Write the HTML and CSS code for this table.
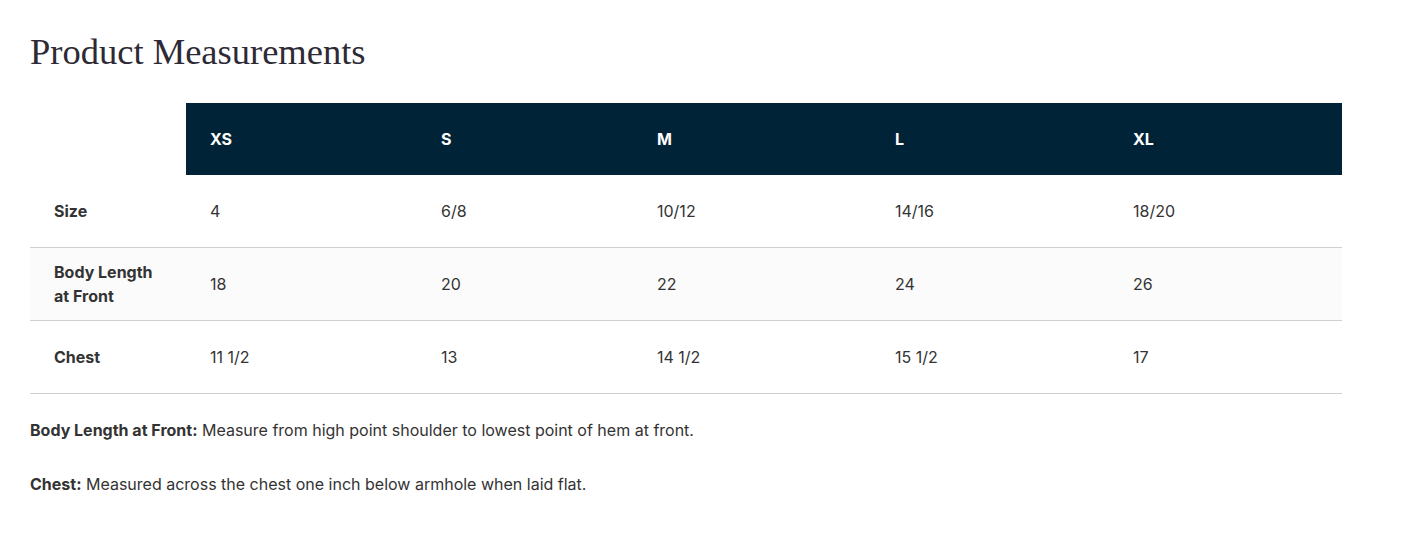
FILE: index.html
```html
<!DOCTYPE html>
<html>
<head>
<meta charset="utf-8">
<link rel="stylesheet" href="styles.css">
</head>
<body>
<section class="measure">
  <h2 class="title">Product Measurements</h2>
  <table class="chart">
    <thead>
      <tr>
        <th class="c0 blank"></th>
        <th class="c1">XS</th>
        <th class="c2">S</th>
        <th class="c3">M</th>
        <th class="c4">L</th>
        <th class="c5">XL</th>
      </tr>
    </thead>
    <tbody>
      <tr>
        <th class="rowhead">Size</th>
        <td>4</td><td>6/8</td><td>10/12</td><td>14/16</td><td>18/20</td>
      </tr>
      <tr class="alt">
        <th class="rowhead">Body Length at Front</th>
        <td>18</td><td>20</td><td>22</td><td>24</td><td>26</td>
      </tr>
      <tr>
        <th class="rowhead">Chest</th>
        <td>11 1/2</td><td>13</td><td>14 1/2</td><td>15 1/2</td><td>17</td>
      </tr>
    </tbody>
  </table>
  <p class="note"><strong>Body Length at Front:</strong> Measure from high point shoulder to lowest point of hem at front.</p>
  <p class="note"><strong>Chest:</strong> Measured across the chest one inch below armhole when laid flat.</p>
</section>
</body>
</html>
```
FILE: styles.css
```css
html, body {
  margin: 0;
  padding: 0;
  background: #ffffff;
}
body {
  font-family: Inter, "Noto Sans", sans-serif;
  color: #333333;
  font-size: 16px;
}
.measure {
  padding: 30px 84px 0 30px;
}
.title {
  font-family: "Liberation Serif", "DejaVu Serif", serif;
  font-weight: 400;
  font-size: 36.5px;
  line-height: 44px;
  color: #2d2a35;
  margin: 0 0 29px 0;
}
.chart {
  width: 1312px;
  border-collapse: separate;
  border-spacing: 0;
  table-layout: fixed;
}
.chart th, .chart td {
  text-align: left;
  padding: 0 24px;
  height: 72px;
  vertical-align: middle;
  line-height: 24px;
}
.chart thead th {
  background: #012338;
  color: #ffffff;
  font-weight: 700;
  font-size: 16px;
}
.chart thead th.blank {
  background: #ffffff;
}
.c0 { width: 108px; }
.c1 { width: 183px; }
.c2 { width: 168px; }
.c3 { width: 190px; }
.c4 { width: 190px; }
.c5 { width: 185px; }
.chart tbody th, .chart tbody td {
  border-bottom: 1px solid #cfcfcf;
}
.chart tbody tr.alt {
  background: #fbfbfb;
}
.chart .rowhead {
  font-weight: 700;
  padding-right: 20px;
}
.chart td {
  font-weight: 400;
}
.note {
  margin: 24px 0 0 0;
  line-height: 24px;
}
.note + .note {
  margin-top: 30px;
}
.note strong {
  font-weight: 700;
}
```
